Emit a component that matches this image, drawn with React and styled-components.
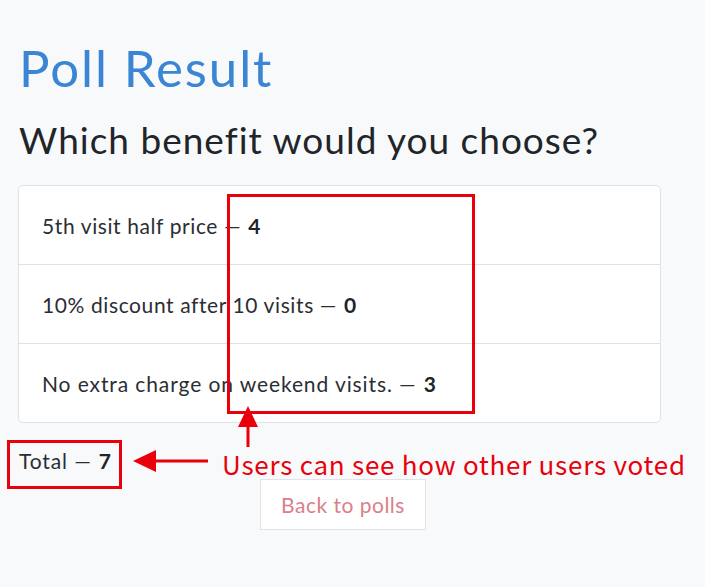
import React from "react";
import styled, { createGlobalStyle } from "styled-components";

const Global = createGlobalStyle`
  html, body { margin: 0; padding: 0; background: #f8f9fa; }
  body { font-family: Lato, "Open Sans", sans-serif; color: #212529; }
  * { box-sizing: border-box; }
`;

const Page = styled.div`
  position: relative;
  width: 705px;
  min-height: 587px;
  padding: 33px 44px 0 18px;
  display: flex;
  flex-direction: column;
`;

const Title = styled.h1`
  margin: 0 0 0 1px;
  font-weight: 400;
  font-size: 51px;
  line-height: 70px;
  color: #3a86d4;
  letter-spacing: 1.9px;
`;

const Question = styled.h2`
  margin: 13px 0 0 1px;
  font-weight: 400;
  font-size: 37px;
  line-height: 48px;
  color: #212529;
  letter-spacing: 1px;
`;

const List = styled.ul`
  list-style: none;
  margin: 21px 0 0 0;
  padding: 0;
  background: #fff;
  border: 1px solid #dfe2e5;
  border-radius: 5px;
`;

const Item = styled.li`
  height: ${(p) => (p.$first ? 78 : 79)}px;
  display: flex;
  align-items: center;
  padding: 0 23px;
  font-size: 21px;
  font-weight: 400;
  color: #2a2e33;
  letter-spacing: ${(p) => p.$spacing}px;
  border-top: ${(p) => (p.$first ? "none" : "1px solid #dfe2e5")};
`;

const Count = styled.b`
  font-weight: 700;
  margin-left: 7px;
  color: #212529;
`;

const Total = styled.div`
  margin: 20px 0 0 1px;
  font-size: 21px;
  line-height: 36px;
  color: #2a2e33;
  letter-spacing: 0.9px;
`;

const BackRow = styled.div`
  display: flex;
  padding-left: 242px;
  margin-top: 0;
`;

const BackButton = styled.button`
  width: 166px;
  height: 51px;
  background: #fff;
  border: 1px solid #e1e4e6;
  border-radius: 0;
  font-family: inherit;
  font-size: 21px;
  color: #d9808a;
  letter-spacing: 0.5px;
  cursor: pointer;
`;

const RedBox = styled.div`
  position: absolute;
  border: 3px solid #e8000b;
  pointer-events: none;
`;

const Note = styled.div`
  position: absolute;
  left: 222px;
  top: 447px;
  font-family: "Noto Sans CJK JP", "Noto Sans", sans-serif;
  font-size: 26px;
  line-height: 34px;
  letter-spacing: 0.75px;
  color: #e8000b;
  white-space: nowrap;
`;

const ArrowSvg = styled.svg`
  position: absolute;
  left: 0;
  top: 0;
  overflow: visible;
  pointer-events: none;
`;

const options = [
  { label: "5th visit half price", votes: 4, spacing: 0.6 },
  { label: "10% discount after 10 visits", votes: 0, spacing: 0.6 },
  { label: "No extra charge on weekend visits.", votes: 3, spacing: 0.9 },
];

export default function App() {
  const total = options.reduce((s, o) => s + o.votes, 0);
  return (
    <>
      <Global />
      <Page>
        <Title>Poll Result</Title>
        <Question>Which benefit would you choose?</Question>
        <List>
          {options.map((o, i) => (
            <Item key={o.label} $first={i === 0} $spacing={o.spacing}>
              {o.label} —<Count>{o.votes}</Count>
            </Item>
          ))}
        </List>
        <Total>
          Total —<Count>{total}</Count>
        </Total>
        <BackRow>
          <BackButton>Back to polls</BackButton>
        </BackRow>

        <RedBox style={{ left: 227, top: 194, width: 248, height: 220 }} />
        <RedBox style={{ left: 7, top: 440, width: 115, height: 49 }} />
        <ArrowSvg width="705" height="587">
          <rect x="246.5" y="424" width="3" height="23" fill="#e8000b" />
          <polygon points="248,406 238,427 258,427" fill="#e8000b" />
          <rect x="154" y="459.5" width="54" height="3" fill="#e8000b" />
          <polygon points="133,461 156,450 156,472" fill="#e8000b" />
        </ArrowSvg>
        <Note>Users can see how other users voted</Note>
      </Page>
    </>
  );
}
